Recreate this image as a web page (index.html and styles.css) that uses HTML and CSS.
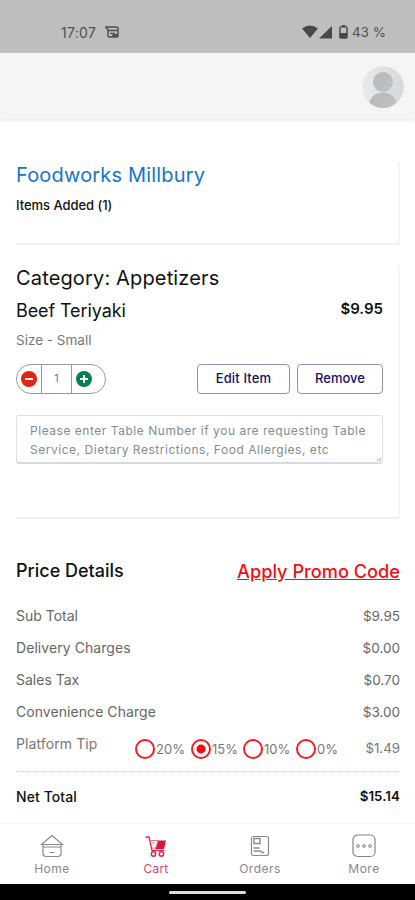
FILE: index.html
```html
<!DOCTYPE html>
<html lang="en">
<head>
<meta charset="utf-8">
<title>Cart</title>
<link rel="stylesheet" href="styles.css">
</head>
<body>
<div class="status">
  <span class="clock">17:07</span>
  <svg class="notice" width="14" height="12" viewBox="0 0 14 12"><path d="M.8 1H12q1 0 1 1v8q0 1-1 1H4q-1 0-1-1V3.500z" fill="none" stroke="#505050" stroke-width="1.500"/><path d="M3 4.500h9.500M5 7.300h5" stroke="#505050" stroke-width="1.300"/><path d="M8 8h5v3H6z" fill="#505050"/></svg>
  <span class="spacer"></span>
  <svg width="31" height="14" viewBox="0 0 31 14" fill="#484848"><path d="M0 3.500Q8 -2.500 16 3.500L8 13zM30 1v12.500H17z"/></svg>
  <svg class="battery" width="9" height="14" viewBox="0 0 9 14"><path d="M2.800 0h3.400v2H2.800z" fill="#484848"/><rect x=".9" y="1.900" width="7.200" height="11.200" rx="1" fill="none" stroke="#484848" stroke-width="1.400"/><path d="M1 8h7v5H1z" fill="#484848"/></svg>
  <span class="percent">43 %</span>
</div>
<header class="header">
  <svg width="42" height="42" viewBox="0 0 42 42">
    <defs><linearGradient id="ring"><stop stop-color="#e9eaeb"/><stop offset="1" stop-color="#d6d8da"/></linearGradient>
    <linearGradient id="person" x2="1" y2="1"><stop stop-color="#b5b8ba"/><stop offset="1" stop-color="#c0c3c5"/></linearGradient>
    <clipPath id="disc"><circle cx="21" cy="21" r="21"/></clipPath></defs>
    <g clip-path="url(#disc)"><circle cx="21" cy="21" r="21" fill="url(#ring)"/><circle cx="21" cy="16" r="10" fill="url(#person)"/><path d="M7 40c0-8 6-13.500 14-13.500S35 32 35 40v3H7z" fill="url(#person)"/></g>
  </svg>
</header>
<main>
  <section class="card shop">
    <h1>Foodworks Millbury</h1>
    <p>Items Added (1)</p>
  </section>
  <section class="card item">
    <h2 class="category">Category: Appetizers</h2>
    <div class="row dish"><span class="dish-name">Beef Teriyaki</span><b>$9.95</b></div>
    <p class="size">Size - Small</p>
    <div class="row controls">
      <div class="stepper">
        <span><svg width="16" height="16" viewBox="0 0 16 16"><circle cx="8" cy="8" r="8" fill="#e42312"/><path d="M4 8h8" stroke="#fff" stroke-width="2"/></svg></span>
        <span class="count">1</span>
        <span><svg width="16" height="16" viewBox="0 0 16 16"><circle cx="8" cy="8" r="8" fill="#078050"/><path d="M4 8h8M8 4v8" stroke="#fff" stroke-width="2"/></svg></span>
      </div>
      <div class="buttons"><button class="edit">Edit Item</button><button class="remove">Remove</button></div>
    </div>
    <div class="note">
      <div>Please enter Table Number if you are requesting Table</div>
      <div>Service, Dietary Restrictions, Food Allergies, etc</div>
      <svg class="grip" width="4" height="3" viewBox="0 0 4 3"><path d="M0 3L4 0M2 3l2-1" stroke="#999" stroke-width=".8"/></svg>
    </div>
  </section>
  <section class="prices">
    <div class="row title"><h2 class="price-title">Price Details</h2><a class="promo">Apply Promo Code</a></div>
    <div class="row line"><span>Sub Total</span><span class="amount">$9.95</span></div>
    <div class="row line"><span class="spaced">Delivery Charges</span><span class="amount">$0.00</span></div>
    <div class="row line"><span>Sales Tax</span><span class="amount">$0.70</span></div>
    <div class="row line"><span class="spaced">Convenience Charge</span><span class="amount">$3.00</span></div>
    <div class="tip">
      <span class="tip-name">Platform Tip</span>
      <label><i></i>20%</label><label><i class="on"></i>15%</label><label><i></i>10%</label><label><i></i>0%</label>
      <span class="tip-value">$1.49</span>
    </div>
    <div class="row net"><span>Net Total</span><span class="net-value">$15.14</span></div>
  </section>
</main>
<nav>
  <div class="tab"><svg width="24" height="24" viewBox="0 0 24 24" fill="none" stroke="#8b8b8b"><path d="M12 1.500L1.500 10.500h21zM3 10.500v9q0 3 3 3h12q3 0 3-3v-9M3 13h18M9.500 18.500h5" stroke-width="1.200"/></svg><span>Home</span></div>
  <div class="tab active"><svg width="24" height="24" viewBox="0 0 24 24" fill="none" stroke="#e0284f"><path d="M1.500 3h3.500l3 13.500h12.500" stroke-width="1.300"/><path d="M14 6.500h8l-2 8.500h-9z" fill="#d9143f" stroke="none"/><path d="M6 6.500h8l-2 7.500H8M8 9h3" stroke-width="1" stroke="#e97991"/><circle cx="9.500" cy="20" r="2.200" stroke-width="1.500"/><circle cx="17.500" cy="20" r="2.200" stroke-width="1.500"/></svg><span>Cart</span></div>
  <div class="tab"><svg width="24" height="24" viewBox="0 0 24 24" fill="none" stroke="#8b8b8b"><rect x="3.500" y="2.500" width="17" height="19" rx="2" stroke-width="1.200"/><path d="M6 4.500h6v5H6zM5.500 14h6M5.500 17h8M13 18.500h3" stroke-width="1.400"/></svg><span>Orders</span></div>
  <div class="tab"><svg width="24" height="24" viewBox="0 0 24 24" fill="none" stroke="#858585"><rect x="1" y="1" width="22" height="21.500" rx="4.500" stroke-width="1.200"/><circle cx="6" cy="12" r="1.400"/><circle cx="12" cy="12" r="1.400"/><circle cx="18" cy="12" r="1.400"/></svg><span>More</span></div>
</nav>
<footer><div class="pill"></div></footer>
</body>
</html>
```
FILE: styles.css
```css
* { box-sizing: border-box; }
body { margin: 0; width: 415px; height: 900px; overflow: hidden; display: flex; flex-direction: column; background: #fff; color: #111; font-family: Inter, "Liberation Sans", sans-serif; }
h1, h2, p { margin: 0; font-weight: 400; white-space: nowrap; }
svg { display: block; flex: none; }
.row { display: flex; justify-content: space-between; white-space: nowrap; }
.status { height: 53px; flex: none; background: #bebebe; display: flex; align-items: center; padding: 11px 29px 0 61px; color: #505050; font-size: 14px; }
.clock { letter-spacing: .3px; }
.notice { margin-left: 9px; }
.spacer { flex: 1; }
.battery { margin: 0 4px 0 6px; }
.percent { font-size: 13.5px; }
.header { height: 66px; flex: none; background: #f5f5f5; box-shadow: 0 2px 3px #ececec; display: flex; justify-content: flex-end; padding: 13px 11px 0 0; }
main { height: 704px; flex: none; padding: 43px 15px 0 16px; }
.card { border-right: 2px solid #f5f5f5; border-bottom: 2px solid #f1f1f1; }
.shop { height: 83px; }
.shop h1 { font-size: 20px; line-height: 26px; color: #1674cc; letter-spacing: .18px; }
.shop p { font-size: 13px; line-height: 20px; font-weight: 500; margin-top: 7px; letter-spacing: -.05px; }
.item { height: 254px; margin-top: 20px; padding-right: 15px; }
.category { font-size: 20px; line-height: 26px; letter-spacing: .15px; }
.dish { font-size: 18px; line-height: 26px; margin-top: 7px; }
.dish-name { letter-spacing: -.1px; }
.dish b { font-size: 15px; line-height: 22px; font-weight: 600; }
.size { font-size: 13.5px; line-height: 20px; margin-top: 6px; color: #777; }
.controls { margin-top: 14px; }
.stepper { width: 90px; height: 30px; border: 1px solid #999; border-radius: 15px; display: grid; grid-template-columns: 24px 31px 33px; align-items: center; }
.stepper > span { display: flex; padding-left: 4px; }
.stepper .count { height: 28px; padding: 0 0 2px; border-left: 1px solid #999; border-right: 1px solid #999; align-items: center; justify-content: center; font-size: 11px; color: #777; }
.buttons { display: flex; gap: 7px; }
button { height: 30px; border: 1px solid #9291b2; border-radius: 4px; background: #fff; color: #151365; font: 500 13px/20px Inter, sans-serif; padding: 0 0 3px; white-space: nowrap; }
.edit { width: 93px; letter-spacing: .15px; }
.remove { width: 86px; }
.note { height: 49px; margin-top: 21px; border: 1px solid #dde0e2; border-bottom: 2px solid #d8dbdd; border-radius: 3px; padding: 6px 12px 0 13px; color: #858b90; font-size: 12px; line-height: 18.5px; white-space: nowrap; position: relative; letter-spacing: .53px; }
.grip { position: absolute; right: 1px; bottom: 1px; }
.title { height: 44px; margin-top: 37px; line-height: 30px; }
.price-title { font-size: 18px; font-weight: 500; }
.promo { color: #fb0b12; font-size: 18.2px; font-weight: 500; text-decoration: underline; }
.line { height: 32px; line-height: 32px; font-size: 14px; color: #666; }
.spaced { letter-spacing: .06px; }
.amount { font-size: 13.5px; }
.tip { display: flex; height: 44px; border-bottom: 1px dotted #ccc; font-size: 13px; color: #777; white-space: nowrap; }
.tip-name { width: 119px; font-size: 14px; line-height: 31px; letter-spacing: .1px; }
.tip label { display: flex; align-items: center; height: 41px; width: 56px; }
.tip label:nth-of-type(2) { width: 52px; }
.tip label:nth-of-type(3) { width: 53px; }
.tip label:nth-of-type(4) { width: 42px; }
.tip i { width: 20px; height: 20px; flex: none; border: 2px solid #f51c22; border-radius: 50%; margin-right: 1px; }
.tip i.on { background: radial-gradient(circle, #fb0b12 0 4px, #fff 5px); }
.tip-value { margin-left: auto; line-height: 41px; font-size: 13.3px; }
.net { font-size: 14px; font-weight: 500; line-height: 49px; letter-spacing: .08px; }
.net-value { font-size: 13.3px; font-weight: 600; }
nav { height: 61px; flex: none; display: grid; grid-template-columns: repeat(4, 104px); border-top: 1px solid #f5f5f5; background: #fff; font-size: 12px; color: #888; }
.tab { display: flex; flex-direction: column; align-items: center; padding-top: 10px; line-height: 16px; gap: 3px; letter-spacing: .5px; }
.active { color: #e34566; }
.active span { letter-spacing: .2px; }
footer { flex: 1; background: #000; display: flex; justify-content: center; padding-top: 7px; }
.pill { width: 77px; height: 3px; border-radius: 2px; background: #ddd; }
```
